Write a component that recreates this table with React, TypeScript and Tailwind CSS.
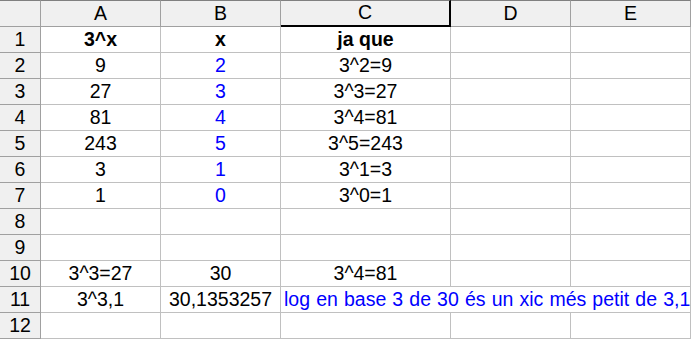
import React from "react";

type Cell = { v: string; bold?: boolean; blue?: boolean };

const E: Cell = { v: "" };
const c = (v: string, opts: Partial<Cell> = {}): Cell => ({ v, ...opts });

const rows: Cell[][] = [
  [c("3^x", { bold: true }), c("x", { bold: true }), c("ja que", { bold: true }), E, E],
  [c("9"), c("2", { blue: true }), c("3^2=9"), E, E],
  [c("27"), c("3", { blue: true }), c("3^3=27"), E, E],
  [c("81"), c("4", { blue: true }), c("3^4=81"), E, E],
  [c("243"), c("5", { blue: true }), c("3^5=243"), E, E],
  [c("3"), c("1", { blue: true }), c("3^1=3"), E, E],
  [c("1"), c("0", { blue: true }), c("3^0=1"), E, E],
  [E, E, E, E, E],
  [E, E, E, E, E],
  [c("3^3=27"), c("30"), c("3^4=81"), E, E],
  [c("3^3,1"), c("30,1353257"), E, E, E],
  [E, E, E, E, E],
];

const colLetters = ["A", "B", "C", "D", "E"];

export default function App() {
  return (
    <div className="w-[691px] h-[340px] bg-white overflow-hidden font-['Liberation_Sans',Arial,sans-serif] text-[19.5px] text-black">
      <div className="grid grid-cols-[41px_120px_120px_170px_120px_120px] grid-rows-[27px_repeat(12,26px)]">
        {/* header row */}
        <div className="bg-[#f0f0f0] border-t border-t-[#808080] border-b border-r border-b-[#a0a0a0] border-r-[#a0a0a0]" />
        {colLetters.map((l) =>
          l === "C" ? (
            <div
              key={l}
              className="bg-[#f0f0f0] border-t border-t-[#808080] border-b-2 border-r-2 border-b-black border-r-black flex items-center justify-center leading-none"
            >
              {l}
            </div>
          ) : (
            <div
              key={l}
              className="bg-[#f0f0f0] border-t border-t-[#808080] border-b border-r border-b-[#a0a0a0] border-r-[#a0a0a0] flex items-center justify-center leading-none"
            >
              {l}
            </div>
          )
        )}
        {rows.map((row, ri) => (
          <React.Fragment key={ri}>
            <div className="bg-[#f0f0f0] border-b border-r border-[#a0a0a0] flex items-center justify-center leading-none">
              {ri + 1}
            </div>
            {row.map((cell, ci) => {
              if (ri === 10 && ci === 2) {
                return (
                  <div
                    key={ci}
                    className="relative z-10 border-b border-[#c0c0c0] flex items-center pl-[3px] whitespace-nowrap leading-none text-[#0000ff] overflow-visible [word-spacing:0.7px]"
                  >
                    log en base 3 de 30 és un xic més petit de 3,1
                  </div>
                );
              }
              if (ri === 10 && ci === 3) {
                return <div key={ci} className="border-b border-[#c0c0c0]" />;
              }
              return (
                <div
                  key={ci}
                  className={
                    "border-b border-r border-[#c0c0c0] flex items-center justify-center leading-none whitespace-nowrap " +
                    (cell.bold ? "font-bold " : "") +
                    (cell.blue ? "text-[#0000ff]" : "")
                  }
                >
                  {cell.v}
                </div>
              );
            })}
          </React.Fragment>
        ))}
      </div>
    </div>
  );
}
